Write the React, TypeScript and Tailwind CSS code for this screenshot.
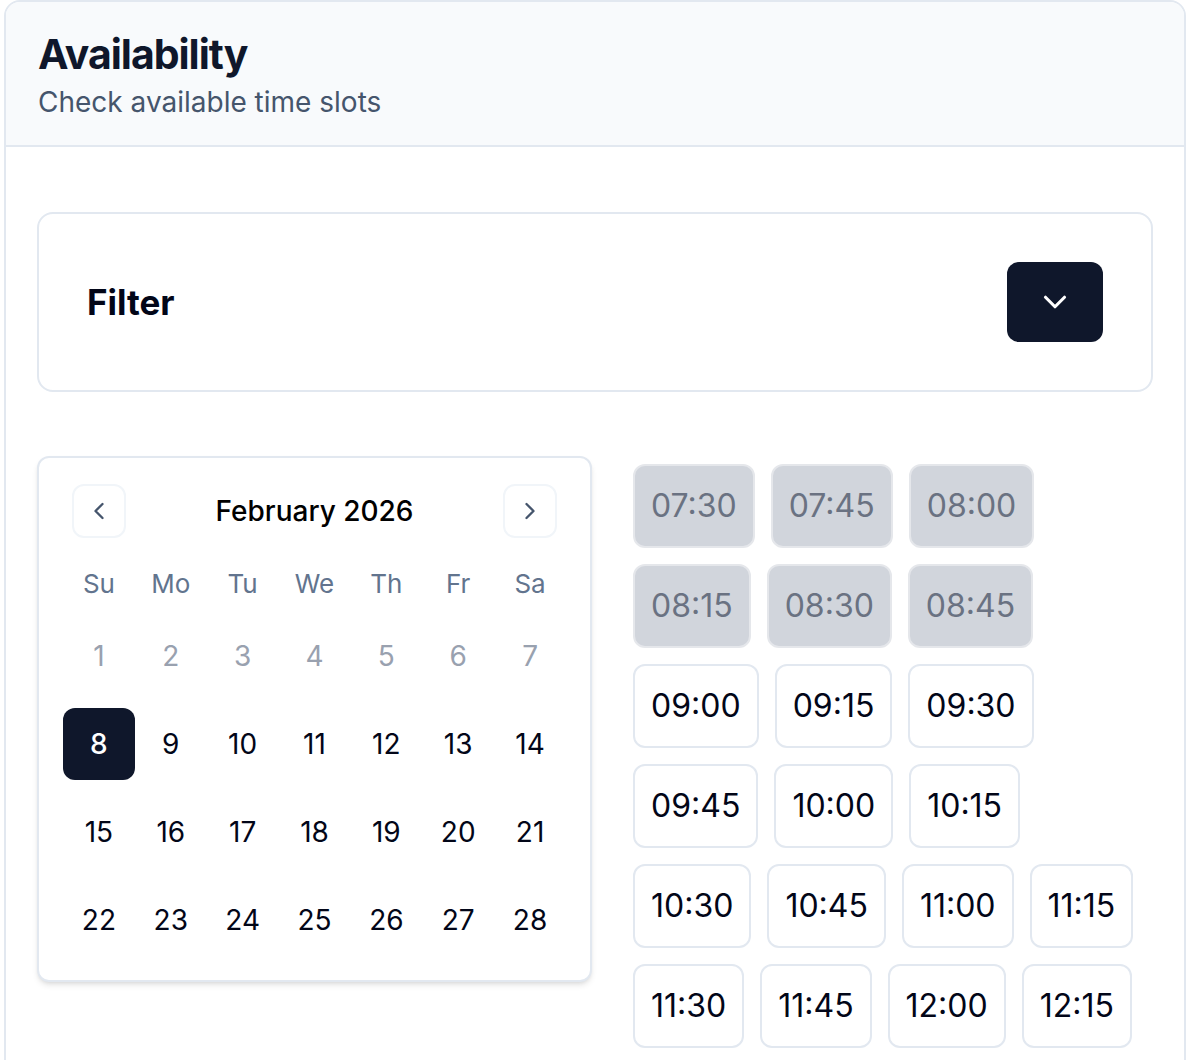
import { ChevronDown, ChevronLeft, ChevronRight } from 'lucide-react'

const WEEKDAYS = ['Su', 'Mo', 'Tu', 'We', 'Th', 'Fr', 'Sa']

const SLOTS: { time: string; disabled?: boolean }[] = [
  { time: '07:30', disabled: true },
  { time: '07:45', disabled: true },
  { time: '08:00', disabled: true },
  { time: '08:15', disabled: true },
  { time: '08:30', disabled: true },
  { time: '08:45', disabled: true },
  { time: '09:00' },
  { time: '09:15' },
  { time: '09:30' },
  { time: '09:45' },
  { time: '10:00' },
  { time: '10:15' },
  { time: '10:30' },
  { time: '10:45' },
  { time: '11:00' },
  { time: '11:15' },
  { time: '11:30' },
  { time: '11:45' },
  { time: '12:00' },
  { time: '12:15' },
]

function Calendar({ selected }: { selected: number }) {
  const days = Array.from({ length: 28 }, (_, i) => i + 1)
  return (
    <div className="w-[555px] shrink-0 rounded-xl border-2 border-slate-200 bg-white px-6 pb-6 pt-[26px] shadow-md">
      {/* caption */}
      <div className="flex items-center justify-between px-[9px]">
        <button className="flex h-[54px] w-[54px] items-center justify-center rounded-xl border-2 border-slate-100 text-slate-600">
          <ChevronLeft size={28} strokeWidth={2} />
        </button>
        <span className="text-[28px] font-medium text-black">February 2026</span>
        <button className="flex h-[54px] w-[54px] items-center justify-center rounded-xl border-2 border-slate-100 text-slate-600">
          <ChevronRight size={28} strokeWidth={2} />
        </button>
      </div>

      {/* weekdays */}
      <div className="mt-6 grid grid-cols-7">
        {WEEKDAYS.map(d => (
          <div key={d} className="flex h-[42px] items-center justify-center text-[26px] text-slate-500">
            {d}
          </div>
        ))}
      </div>

      {/* days */}
      <div className="mt-4 grid grid-cols-7 gap-y-4">
        {days.map(d => {
          const past = d < selected
          const isSel = d === selected
          return (
            <div
              key={d}
              className={
                'flex h-[72px] items-center justify-center rounded-xl text-[28px] ' +
                (isSel ? 'bg-slate-900 font-medium text-white' : past ? 'text-gray-400' : 'text-slate-950')
              }
            >
              {d}
            </div>
          )
        })}
      </div>
    </div>
  )
}

export default function App() {
  return (
    <div className="h-[1060px] overflow-hidden bg-white font-['Inter',sans-serif]">
      <div className="ml-1 w-[1182px] overflow-hidden rounded-2xl border-2 border-slate-200 bg-white">
        {/* header */}
        <div className="border-b-2 border-slate-200 bg-slate-50 px-8 pb-[23px] pt-[27px]">
          <h1 className="text-[41px] font-bold leading-[50px] tracking-tight text-slate-900">Availability</h1>
          <p className="mt-[3px] text-[28px] leading-[40px] text-slate-600">Check available time slots</p>
        </div>

        {/* body */}
        <div className="px-[31px] pb-16 pt-[65px]">
          <div className="flex items-center justify-between rounded-2xl border-2 border-slate-200 px-12 py-12">
            <span className="text-[35px] font-bold text-slate-950">Filter</span>
            <button className="flex h-20 w-24 items-center justify-center rounded-xl bg-slate-900 text-white">
              <ChevronDown size={38} strokeWidth={2} />
            </button>
          </div>

          <div className="mt-16 flex items-start gap-[41px]">
            <Calendar selected={8} />

            <div className="flex w-[510px] flex-wrap gap-4 pt-2">
              {SLOTS.map(s => (
                <button
                  key={s.time}
                  className={
                    'h-[84px] rounded-xl border-2 px-4 text-[32px] ' +
                    (s.disabled
                      ? 'border-gray-200 bg-gray-300 text-gray-500'
                      : 'border-slate-200 bg-white text-slate-950')
                  }
                >
                  {s.time}
                </button>
              ))}
            </div>
          </div>
        </div>
      </div>
    </div>
  )
}
